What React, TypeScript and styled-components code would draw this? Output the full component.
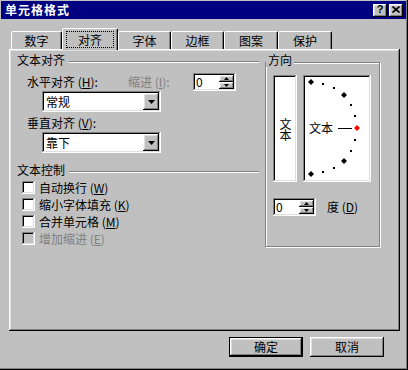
import React from 'react';
import styled, { createGlobalStyle } from 'styled-components';

const GlobalStyle = createGlobalStyle`
  html, body {
    margin: 0;
    padding: 0;
    background: #c0c0c0;
  }
  body {
    font-family: "Noto Sans CJK SC", "Noto Sans", sans-serif;
    font-size: 12px;
    color: #000;
  }
  * {
    box-sizing: border-box;
  }
`;

const raised = `box-shadow: inset -1px -1px #000, inset 1px 1px #fff, inset -2px -2px #808080, inset 2px 2px #dfdfdf;`;
const sunken = `box-shadow: inset -1px -1px #fff, inset 1px 1px #808080, inset -2px -2px #dfdfdf, inset 2px 2px #000;`;

const Window = styled.div`
  width: 408px;
  height: 370px;
  background: #c0c0c0;
  display: flex;
  flex-direction: column;
  padding: 1px 2px 2px 1px;
  box-shadow: inset -1px -1px #000, inset -2px -2px #808080;
`;

const TitleBar = styled.div`
  height: 18px;
  flex-shrink: 0;
  background: #000080;
  display: flex;
  align-items: center;
  padding: 0 3px 0 4px;
`;

const Title = styled.span`
  color: #fff;
  font-weight: bold;
  font-size: 12px;
  line-height: 18px;
  letter-spacing: 1px;
`;

const TitleButtons = styled.div`
  margin-left: auto;
  display: flex;
  gap: 2px;
`;

const TitleButton = styled.div`
  width: 14px;
  height: 13px;
  background: #c0c0c0;
  ${raised}
  display: flex;
  align-items: center;
  justify-content: center;
  font: bold 11px "Liberation Sans", sans-serif;
  line-height: 11px;
  padding-bottom: 1px;
`;

const Body = styled.div`
  flex: 1;
  display: flex;
  flex-direction: column;
  padding: 9px 6px 0 8px;
`;

const TabRow = styled.div`
  display: flex;
  align-items: flex-end;
  height: 21px;
  padding-left: 2px;
`;

const Tab = styled.div<{ $w: number; $active?: boolean }>`
  width: ${p => p.$w}px;
  height: ${p => (p.$active ? 22 : 18)}px;
  margin-bottom: ${p => (p.$active ? -1 : 0)}px;
  position: relative;
  z-index: ${p => (p.$active ? 2 : 0)};
  background: #c0c0c0;
  border-style: solid;
  border-width: 1px 1px 0 1px;
  border-color: #fff #000 transparent #fff;
  border-radius: 2px 2px 0 0;
  box-shadow: inset -1px 0 #808080;
  display: flex;
  align-items: center;
  justify-content: center;
  line-height: 14px;
`;

const FocusLabel = styled.span`
  display: inline-block;
  padding: 1px 11px;
  line-height: 13px;
  border: 1px dotted #000;
`;

const Panel = styled.div`
  height: 282px;
  ${raised}
  display: grid;
  grid-template-columns: 242px 115px;
  column-gap: 6px;
  align-items: start;
  padding: 4px 0 0 8px;
`;

const Column = styled.div`
  display: flex;
  flex-direction: column;
`;

const SectionHeader = styled.div<{ $mt?: number }>`
  display: flex;
  align-items: flex-start;
  height: 14px;
  line-height: 14px;
  margin-top: ${p => p.$mt ?? 0}px;
`;

const SectionLine = styled.div`
  flex: 1;
  margin: 8px 0 0 4px;
  height: 2px;
  border-top: 1px solid #808080;
  border-bottom: 1px solid #fff;
`;

const FieldRow = styled.div<{ $mt?: number; $h?: number }>`
  display: flex;
  align-items: center;
  height: ${p => p.$h ?? 18}px;
  margin: ${p => p.$mt ?? 0}px 0 0 10px;
  white-space: nowrap;
`;

const Label = styled.span<{ $w?: number; $disabled?: boolean }>`
  width: ${p => (p.$w ? `${p.$w}px` : 'auto')};
  color: ${p => (p.$disabled ? '#808080' : '#000')};
  line-height: 14px;
`;

const Spin = styled.div`
  width: 43px;
  height: 18px;
  background: #fff;
  ${sunken}
  display: flex;
  padding: 2px;
`;

const SpinValue = styled.span`
  flex: 1;
  padding-left: 1px;
  line-height: 14px;
`;

const SpinButtons = styled.div`
  display: flex;
  flex-direction: column;
  width: 15px;
`;

const SpinButton = styled.div`
  flex: 1;
  background: #c0c0c0;
  ${raised}
  display: flex;
  align-items: center;
  justify-content: center;
`;

const Combo = styled.div<{ $mt?: number }>`
  width: 119px;
  height: 21px;
  margin: ${p => p.$mt ?? 0}px 0 0 25px;
  background: #fff;
  ${sunken}
  display: flex;
  padding: 2px;
`;

const ComboValue = styled.span`
  flex: 1;
  padding-left: 2px;
  line-height: 17px;
`;

const ComboButton = styled.div`
  width: 16px;
  background: #c0c0c0;
  ${raised}
  display: flex;
  align-items: center;
  justify-content: center;
`;

const CheckRow = styled.label<{ $mt?: number; $disabled?: boolean }>`
  display: flex;
  align-items: center;
  gap: 4px;
  height: 17px;
  margin: ${p => p.$mt ?? 0}px 0 0 5px;
  color: ${p => (p.$disabled ? '#808080' : '#000')};
  line-height: 14px;
`;

const CheckBox = styled.span<{ $disabled?: boolean }>`
  width: 13px;
  height: 13px;
  background: ${p => (p.$disabled ? '#c0c0c0' : '#fff')};
  ${sunken}
`;

const GroupBox = styled.div`
  margin-top: 9px;
  height: 185px;
  border: 1px solid #808080;
  box-shadow: inset 1px 1px #fff, 1px 1px #fff;
  display: flex;
  flex-direction: column;
`;

const GroupTitle = styled.div`
  align-self: flex-start;
  margin-top: -10px;
  padding: 0 2px;
  height: 14px;
  line-height: 14px;
  background: #c0c0c0;
`;

const OrientRow = styled.div`
  display: flex;
  gap: 6px;
  margin: 8px 0 0 7px;
`;

const VerticalText = styled.div`
  width: 24px;
  height: 107px;
  background: #fff;
  ${sunken}
  display: flex;
  align-items: center;
  justify-content: center;
`;

const VerticalLabel = styled.span`
  writing-mode: vertical-rl;
  text-orientation: upright;
  line-height: 12px;
  letter-spacing: -1px;
`;

const Dial = styled.div`
  width: 68px;
  height: 107px;
  background: #fff;
  ${sunken}
  padding: 2px;
`;

const DegreeRow = styled.div`
  display: flex;
  align-items: center;
  gap: 11px;
  height: 18px;
  margin: 16px 0 0 7px;
`;

const ButtonRow = styled.div`
  display: flex;
  justify-content: flex-end;
  gap: 7px;
  margin-top: 6px;
  padding-right: 16px;
`;

const Button = styled.div<{ $default?: boolean }>`
  width: 74px;
  height: 20px;
  background: #c0c0c0;
  display: flex;
  align-items: center;
  justify-content: center;
  line-height: 14px;
  box-shadow: ${p =>
    p.$default
      ? 'inset 0 0 0 1px #000, inset -2px -2px #000, inset 2px 2px #fff, inset -3px -3px #808080, inset 3px 3px #dfdfdf'
      : 'inset -1px -1px #000, inset 1px 1px #fff, inset -2px -2px #808080, inset 2px 2px #dfdfdf'};
`;

const DownArrow = () => (
  <svg width="7" height="4" viewBox="0 0 7 4">
    <path d="M0 0h7L3.5 4z" fill="#000" />
  </svg>
);

const TinyArrow = ({ up }: { up?: boolean }) => (
  <svg width="5" height="3" viewBox="0 0 5 3">
    <path d={up ? 'M2.5 0L5 3H0z' : 'M0 0h5L2.5 3z'} fill="#000" />
  </svg>
);

const SpinBox = ({ value }: { value: string }) => (
  <Spin>
    <SpinValue>{value}</SpinValue>
    <SpinButtons>
      <SpinButton><TinyArrow up /></SpinButton>
      <SpinButton><TinyArrow /></SpinButton>
    </SpinButtons>
  </Spin>
);

const Select = ({ value, mt }: { value: string; mt?: number }) => (
  <Combo $mt={mt}>
    <ComboValue>{value}</ComboValue>
    <ComboButton><DownArrow /></ComboButton>
  </Combo>
);

// dial: centre on the left edge, marks every 15 degrees
const DialDrawing = () => {
  const cx = 6;
  const cy = 51;
  const r = 46;
  const angles = [90, 75, 60, 45, 30, 15, 0, -15, -30, -45, -60, -75, -90];
  return (
    <svg width="64" height="103" viewBox="0 0 64 103">
      {angles.map(a => {
        const x = Math.round(cx + r * Math.cos((a * Math.PI) / 180));
        const y = Math.round(cy - r * Math.sin((a * Math.PI) / 180));
        if (a % 45 === 0) {
          return (
            <polygon
              key={a}
              points={`${x},${y - 3} ${x + 3},${y} ${x},${y + 3} ${x - 3},${y}`}
              fill={a === 0 ? '#ff0000' : '#000'}
            />
          );
        }
        return <rect key={a} x={x - 1} y={y - 1} width="2" height="2" fill="#000" />;
      })}
      <text x="4" y="56" fontSize="12" fontFamily='"Noto Sans CJK SC", sans-serif' fill="#000">
        文本
      </text>
      <rect x="33" y="51" width="14" height="1" fill="#000" />
    </svg>
  );
};

const tabs = [
  { label: '数字', w: 51 },
  { label: '对齐', w: 56, active: true },
  { label: '字体', w: 53 },
  { label: '边框', w: 53 },
  { label: '图案', w: 54 },
  { label: '保护', w: 54 },
];

const App: React.FC = () => {
  return (
    <>
      <GlobalStyle />
      <Window>
        <TitleBar>
          <Title>单元格格式</Title>
          <TitleButtons>
            <TitleButton>?</TitleButton>
            <TitleButton>
              <svg width="8" height="7" viewBox="0 0 8 7">
                <path d="M0.5 0.5L7.5 6.5M7.5 0.5L0.5 6.5" stroke="#000" strokeWidth="1.7" />
              </svg>
            </TitleButton>
          </TitleButtons>
        </TitleBar>

        <Body>
          <TabRow>
            {tabs.map(t => (
              <Tab key={t.label} $w={t.w} $active={t.active}>
                {t.active ? <FocusLabel>{t.label}</FocusLabel> : t.label}
              </Tab>
            ))}
          </TabRow>

          <Panel>
            <Column>
              <SectionHeader>
                文本对齐
                <SectionLine />
              </SectionHeader>
              <FieldRow $mt={6}>
                <Label $w={101}>水平对齐 (<u>H</u>):</Label>
                <Label $w={65} $disabled>缩进 (<u>I</u>):</Label>
                <SpinBox value="0" />
              </FieldRow>
              <Select value="常规" />
              <FieldRow $mt={2} $h={17}>
                <Label>垂直对齐 (<u>V</u>):</Label>
              </FieldRow>
              <Select value="靠下" mt={1} />

              <SectionHeader $mt={10}>
                文本控制
                <SectionLine />
              </SectionHeader>
              <CheckRow $mt={2}>
                <CheckBox />
                <span>自动换行 (<u>W</u>)</span>
              </CheckRow>
              <CheckRow>
                <CheckBox />
                <span>缩小字体填充 (<u>K</u>)</span>
              </CheckRow>
              <CheckRow>
                <CheckBox />
                <span>合并单元格 (<u>M</u>)</span>
              </CheckRow>
              <CheckRow $disabled>
                <CheckBox $disabled />
                <span>增加缩进 (<u>E</u>)</span>
              </CheckRow>
            </Column>

            <GroupBox>
              <GroupTitle>方向</GroupTitle>
              <OrientRow>
                <VerticalText>
                  <VerticalLabel>文本</VerticalLabel>
                </VerticalText>
                <Dial>
                  <DialDrawing />
                </Dial>
              </OrientRow>
              <DegreeRow>
                <SpinBox value="0" />
                <Label>度 (<u>D</u>)</Label>
              </DegreeRow>
            </GroupBox>
          </Panel>

          <ButtonRow>
            <Button $default>确定</Button>
            <Button>取消</Button>
          </ButtonRow>
        </Body>
      </Window>
    </>
  );
};

export default App;
